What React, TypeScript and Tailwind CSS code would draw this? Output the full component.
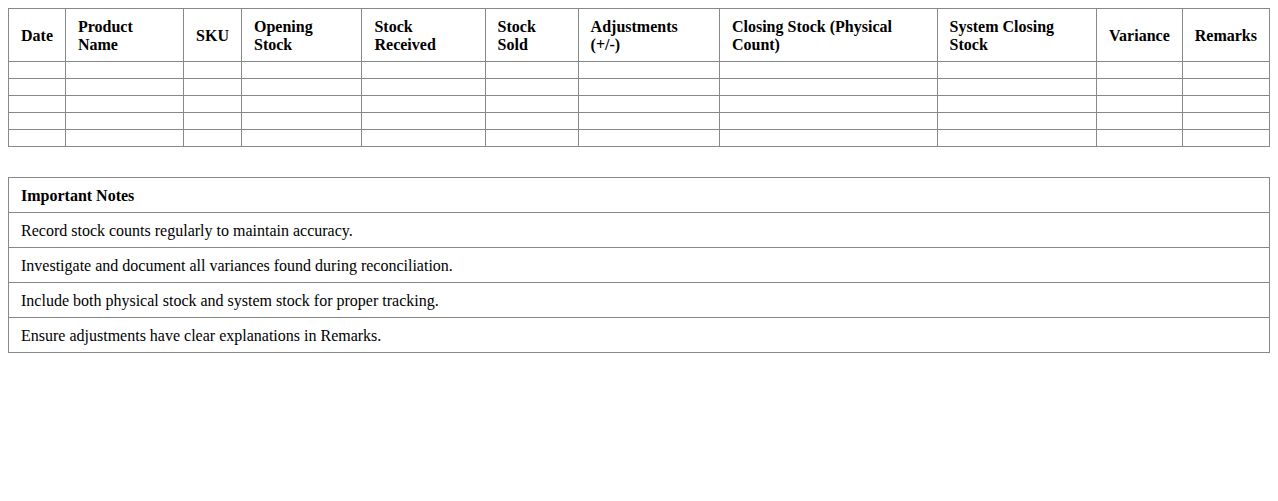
import React from "react";

const headers = [
  "Date",
  "Product Name",
  "SKU",
  "Opening Stock",
  "Stock Received",
  "Stock Sold",
  "Adjustments (+/-)",
  "Closing Stock (Physical Count)",
  "System Closing Stock",
  "Variance",
  "Remarks",
];

const notes = [
  "Record stock counts regularly to maintain accuracy.",
  "Investigate and document all variances found during reconciliation.",
  "Include both physical stock and system stock for proper tracking.",
  "Ensure adjustments have clear explanations in Remarks.",
];

export default function App() {
  return (
    <div className="bg-white p-2 text-black" style={{ fontFamily: '"Liberation Serif", "Times New Roman", serif' }}>
      <table className="w-full border-collapse text-[16px]">
        <thead>
          <tr>
            {headers.map((h) => (
              <th key={h} className="border border-[#888888] px-3 pt-[9px] pb-[7px] text-left font-bold leading-[18px]">
                {h}
              </th>
            ))}
          </tr>
        </thead>
        <tbody>
          {[0, 1, 2, 3, 4].map((r) => (
            <tr key={r}>
              {headers.map((h) => (
                <td key={h} className="border border-[#888888] px-3 py-2"></td>
              ))}
            </tr>
          ))}
        </tbody>
      </table>
      <table className="mt-[30px] w-full border-collapse text-[16px]">
        <tbody>
          <tr>
            <td className="border border-[#888888] px-3 pt-[9px] pb-[7px] font-bold leading-[18px]">Important Notes</td>
          </tr>
          {notes.map((n) => (
            <tr key={n}>
              <td className="border border-[#888888] px-3 pt-[9px] pb-[7px] leading-[18px]">{n}</td>
            </tr>
          ))}
        </tbody>
      </table>
    </div>
  );
}
